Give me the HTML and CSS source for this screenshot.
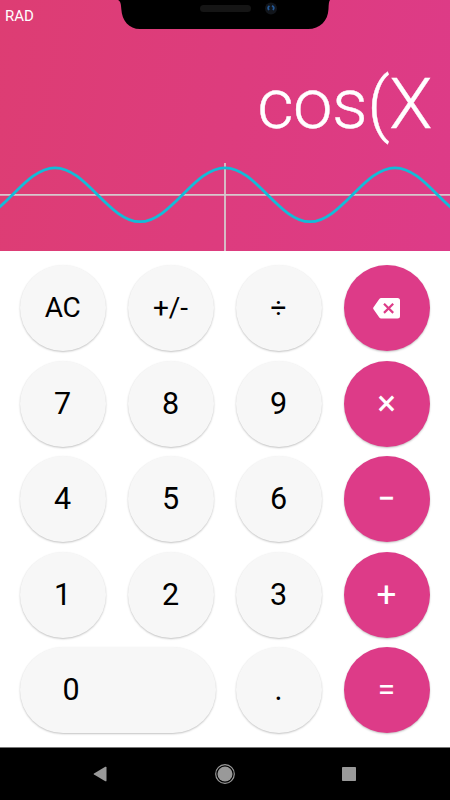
FILE: index.html
```html
<!DOCTYPE html>
<html lang="en">
<head>
<meta charset="utf-8">
<title>Calculator</title>
<link rel="stylesheet" href="styles.css">
</head>
<body>
<main class="screen">
  <header class="display">
    <svg class="notch" width="212" height="29" viewBox="0 0 212 29">
      <path d="M0 0C2.500 1 3 4 3.300 9C4 21 11 29 22 29H190C202 29 210 21 210.500 9C210.700 4 211 1 212 0Z"/>
      <rect class="speaker" x="82" y="5" width="51" height="7" rx="3.500"/>
      <circle class="lens" cx="153" cy="8.500" r="6"/>
      <path class="glint" d="M151.500 6Q149 7.500 151 10M154 5.800Q157 7 155 10"/>
    </svg>
    <div class="mode">RAD</div>
    <div class="expression">cos(X</div>
    <svg class="graph" width="450" height="88" viewBox="0 0 450 88">
      <path class="axis" d="M0 31.800H450M225 0V88"/>
      <path class="curve" d="M-115 4.800C-84 4.800 -61 58.700 -30 58.700C1 58.700 24 4.800 55 4.800C86 4.800 109 58.700 140 58.700C171 58.700 194 4.800 225 4.800C256 4.800 279 58.700 310 58.700C341 58.700 364 4.800 395 4.800C426 4.800 449 58.700 480 58.700"/>
    </svg>
  </header>
  <section class="keys">
    <button class="key small clear">AC</button>
    <button class="key small">+/-</button>
    <button class="key small">÷</button>
    <button class="key accent" aria-label="Delete">
      <svg width="27" height="21" viewBox="0 0 27 21">
        <path class="tag" d="M8.200 0H24.500Q27 0 27 2.500V18Q27 20.500 24.500 20.500H8.200Q7 20.500 6.300 19.500L.5 11.300Q-.2 10.300 .5 9.200L6.300 1Q7 0 8.200 0Z"/>
        <path class="cross" d="M11 5.700L20.200 14.900M20.200 5.700L11 14.900"/>
      </svg>
    </button>
    <button class="key">7</button>
    <button class="key">8</button>
    <button class="key">9</button>
    <button class="key accent large">×</button>
    <button class="key">4</button>
    <button class="key">5</button>
    <button class="key">6</button>
    <button class="key accent bold">−</button>
    <button class="key">1</button>
    <button class="key">2</button>
    <button class="key">3</button>
    <button class="key accent large">+</button>
    <button class="key wide">0</button>
    <button class="key">.</button>
    <button class="key accent equals">=</button>
  </section>
  <nav class="navbar">
    <svg width="14" height="16" viewBox="0 0 14 16"><path d="M12.300 .8Q13.500 .3 13.500 1.500V14.500Q13.500 15.700 12.300 15.200L1 8.600Q0 8 1 7.400Z"/></svg>
    <svg width="20" height="20" viewBox="0 0 20 20"><circle cx="10" cy="10" r="7.500"/><circle class="ring" cx="10" cy="10" r="9.300"/></svg>
    <svg width="14" height="14" viewBox="0 0 14 14"><rect width="14" height="14" rx=".7"/></svg>
  </nav>
</main>
</body>
</html>
```
FILE: styles.css
```css
* { box-sizing: border-box; }

body {
  margin: 0;
  font-family: Roboto, "Liberation Sans", sans-serif;
  background: #fff;
}

.screen {
  width: 450px;
  height: 800px;
  display: flex;
  flex-direction: column;
  overflow: hidden;
}

.display {
  position: relative;
  height: 251px;
  display: flex;
  flex-direction: column;
  color: #fff;
  background: linear-gradient(100deg, #dd3d73, #dd3b88);
}

.notch {
  position: absolute;
  top: 0;
  left: 118px;
}

.speaker { fill: #151515; }
.lens { fill: #11151b; }
.glint { fill: none; stroke: #245896; stroke-width: 1.8; }

.mode {
  padding: 7px 5px 0;
  font-size: 15px;
  line-height: 19px;
}

.expression {
  padding-right: 18px;
  margin-top: 37px;
  height: 100px;
  font-size: 70.5px;
  font-weight: 300;
  line-height: 83px;
  letter-spacing: -.5px;
  text-align: right;
  -webkit-text-stroke: .4px #fff;
}

.graph { display: block; }

.axis {
  fill: none;
  stroke: #d6c8cd;
  stroke-width: 1.8;
}

.curve {
  fill: none;
  stroke: #13bcd8;
  stroke-width: 2.8;
}

.keys {
  height: 496px;
  padding: 14px 19.5px 0;
  display: grid;
  grid-template-columns: repeat(4, 86px);
  grid-auto-rows: 86px;
  gap: 9.5px 22px;
}

.key {
  display: flex;
  align-items: center;
  justify-content: center;
  padding: 0;
  border: 0;
  border-radius: 43px;
  font: 400 30.5px/36px Roboto, "Liberation Sans", sans-serif;
  color: #000;
  background: #f7f7f7;
  box-shadow: 0 1px 2px rgba(0, 0, 0, .24);
}

.small { font-size: 28px; }
.clear { letter-spacing: -.5px; }

.accent {
  color: #fff;
  background: #dd3b88;
}

.large { font-size: 35px; }
.bold { -webkit-text-stroke: .5px #fff; }
.equals { font-size: 31.5px; }

.wide {
  grid-column: span 2;
  width: 196px;
  justify-content: flex-start;
  padding-left: 43px;
}

.tag { fill: #fff; }
.cross { fill: none; stroke: #dd3b88; stroke-width: 2.2; }

.navbar {
  height: 53px;
  padding: 0 94px 0 93px;
  display: flex;
  align-items: center;
  justify-content: space-between;
  background: #000;
  border-top: 1px solid #777;
}

.navbar svg { fill: #999; }
.navbar .ring { fill: none; stroke: #999; stroke-width: 1.2; }
```
